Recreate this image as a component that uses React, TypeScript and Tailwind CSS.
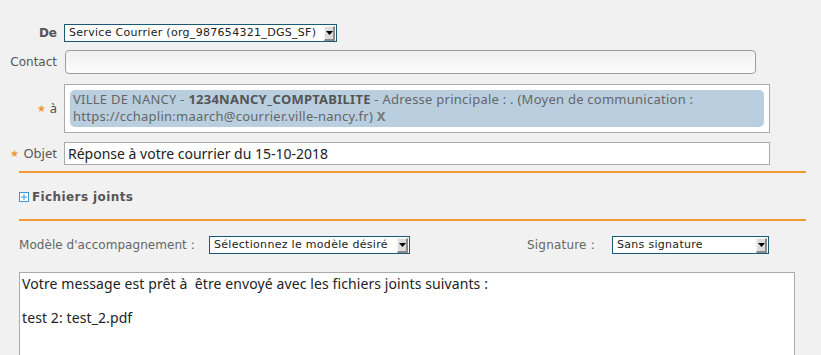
import React from "react";

const labelFont = "font-['DejaVu_Sans',Verdana,sans-serif]";
const bodyFont = "font-['Noto_Sans','Open_Sans',sans-serif]";

function Arrow() {
  return (
    <span className="flex h-[15px] w-[11px] items-center justify-center border-t border-l border-t-[#f4f4f4] border-l-[#f4f4f4] border-r-2 border-b-2 border-r-[#8a8a8a] border-b-[#8a8a8a] bg-[#dcdcdc]">
      <svg width="7" height="4" viewBox="0 0 7 4">
        <path d="M0 0h7L3.5 4z" fill="#000" />
      </svg>
    </span>
  );
}

function FakeSelect({ value, className }: { value: string; className: string }) {
  return (
    <div
      className={`flex h-[18px] items-center justify-between border border-[#1b5a73] bg-white pl-[4px] pr-[1px] text-[11px] tracking-[0.3px] text-[#222] ${labelFont} ${className}`}
    >
      <span className="truncate">{value}</span>
      <Arrow />
    </div>
  );
}

function Star() {
  return <span className="mr-[4px] text-[10px] text-[#f0952f]">★</span>;
}

export default function App() {
  return (
    <div className="h-[355px] w-[821px] overflow-hidden bg-[#f1f1f1] pt-[24px]">
      <div className="flex items-center">
        <div className={`w-[57px] text-right text-[12px] font-bold text-[#555] ${labelFont}`}>De</div>
        <FakeSelect value="Service Courrier (org_987654321_DGS_SF)" className="ml-[7px] w-[273px]" />
      </div>

      <div className="mt-[8px] flex items-center">
        <div className={`w-[57px] text-right text-[12px] text-[#555] ${labelFont}`}>Contact</div>
        <div className="ml-[8px] h-[24px] w-[691px] rounded-[4px] border border-[#9d9d9d] bg-gradient-to-b from-[#f0f0f0] to-[#fdfdfd]" />
      </div>

      <div className="mt-[10px] flex items-center">
        <div className={`flex w-[57px] items-center justify-end text-[13px] text-[#555] ${bodyFont}`}>
          <Star />à
        </div>
        <div className="ml-[7px] h-[49px] w-[706px] border border-[#aaa] bg-white p-[5px]">
          <div className={`h-[37px] rounded-[5px] bg-[#b9cfdf] px-[3px] pt-[1px] text-[13px] leading-[17px] tracking-[0.25px] text-[#666] ${bodyFont}`}>
            VILLE DE NANCY - <b className="text-[#555]">1234NANCY_COMPTABILITE</b> - Adresse principale : . (Moyen de
            communication :<br />
            https://cchaplin:maarch@courrier.ville-nancy.fr) <b className="text-[#777]">X</b>
          </div>
        </div>
      </div>

      <div className="mt-[9px] flex items-center">
        <div className={`flex w-[57px] items-center justify-end text-[13px] text-[#555] ${bodyFont}`}>
          <Star />Objet
        </div>
        <div
          className={`ml-[7px] flex h-[23px] w-[706px] items-center border border-[#aaa] bg-white pl-[3px] text-[14px] text-[#222] ${bodyFont}`}
        >
          Réponse à votre courrier du 15-10-2018
        </div>
      </div>

      <div className="ml-[19px] mt-[6px] h-[2px] w-[787px] bg-[#f29a38]" />

      <div className={`ml-[19px] mt-[15px] flex items-center text-[12px] font-bold tracking-[0.4px] text-[#555] ${labelFont}`}>
        <svg width="10" height="10" viewBox="0 0 10 10" className="mr-[3px]">
          <rect x="0.5" y="0.5" width="9" height="9" fill="#fff" stroke="#3a9ad9" />
          <path d="M2 5h6M5 2v6" stroke="#3a9ad9" strokeWidth="1" />
        </svg>
        Fichiers joints
      </div>

      <div className="ml-[19px] mt-[13px] h-[2px] w-[787px] bg-[#f29a38]" />

      <div className="mt-[15px] flex items-center">
        <div className={`ml-[19px] w-[190px] text-[12px] tracking-[0.05px] text-[#666] ${labelFont}`}>
          Modèle d'accompagnement :
        </div>
        <FakeSelect value="Sélectionnez le modèle désiré" className="w-[201px]" />
        <div className={`ml-[117px] w-[85px] text-[12px] tracking-[0.2px] text-[#666] ${labelFont}`}>Signature :</div>
        <FakeSelect value="Sans signature" className="w-[157px]" />
      </div>

      <div
        className={`ml-[19px] mt-[18px] h-[120px] w-[776px] border border-[#aaa] bg-white pl-[2px] pt-[2px] text-[14px] leading-[17px] tracking-[0.1px] text-[#222] ${bodyFont}`}
      >
        <p>Votre message est prêt à&nbsp; être envoyé avec les fichiers joints suivants :</p>
        <p className="mt-[17px]">test 2: test_2.pdf</p>
      </div>
    </div>
  );
}
